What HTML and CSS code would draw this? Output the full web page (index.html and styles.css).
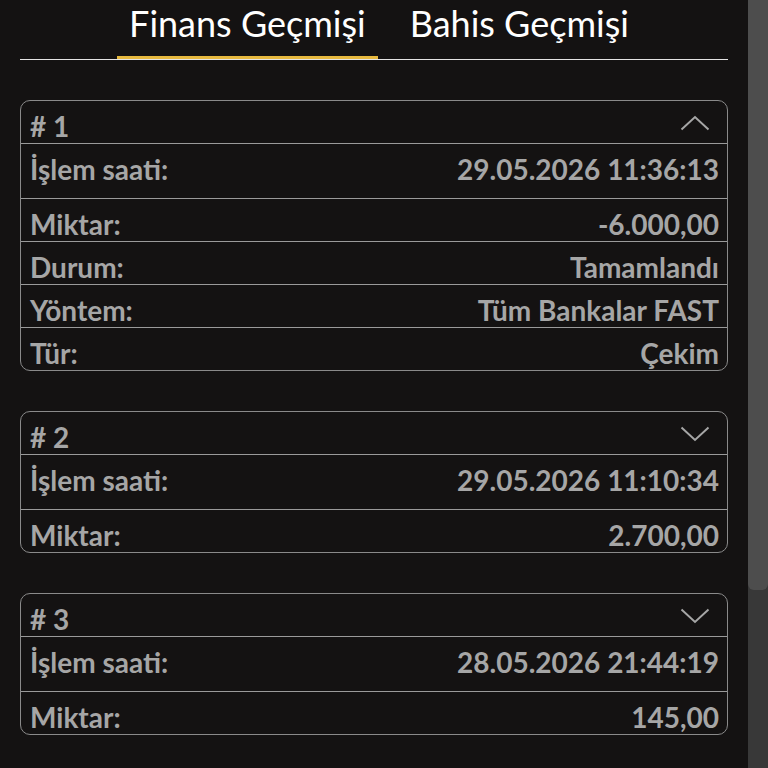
FILE: index.html
```html
<!DOCTYPE html>
<html lang="tr">
<head>
<meta charset="utf-8">
<title>Finans Geçmişi</title>
<link rel="stylesheet" href="styles.css">
</head>
<body>
<div class="page">
  <nav class="tabs">
    <a class="tab tab--active">Finans Geçmişi</a>
    <a class="tab">Bahis Geçmişi</a>
  </nav>

  <section class="history">
    <article class="card">
      <header class="card__head">
        <span># 1</span>
        <svg class="chev" width="30" height="16" viewBox="0 0 30 16"><polyline points="1.5,14.5 15,2 28.5,14.5" /></svg>
      </header>
      <div class="row row--time"><span>İşlem saati:</span><span>29.05.2026 11:36:13</span></div>
      <div class="row"><span>Miktar:</span><span>-6.000,00</span></div>
      <div class="row"><span>Durum:</span><span>Tamamlandı</span></div>
      <div class="row"><span>Yöntem:</span><span>Tüm Bankalar FAST</span></div>
      <div class="row"><span>Tür:</span><span>Çekim</span></div>
    </article>

    <article class="card">
      <header class="card__head">
        <span># 2</span>
        <svg class="chev" width="30" height="16" viewBox="0 0 30 16"><polyline points="1.5,1.5 15,14 28.5,1.5" /></svg>
      </header>
      <div class="row row--time"><span>İşlem saati:</span><span>29.05.2026 11:10:34</span></div>
      <div class="row"><span>Miktar:</span><span>2.700,00</span></div>
    </article>

    <article class="card">
      <header class="card__head">
        <span># 3</span>
        <svg class="chev" width="30" height="16" viewBox="0 0 30 16"><polyline points="1.5,1.5 15,14 28.5,1.5" /></svg>
      </header>
      <div class="row row--time"><span>İşlem saati:</span><span>28.05.2026 21:44:19</span></div>
      <div class="row"><span>Miktar:</span><span>145,00</span></div>
    </article>
  </section>
</div>
<div class="scrollbar"><div class="scrollbar__thumb"></div></div>
</body>
</html>
```

FILE: styles.css
```css
html {
  background: #141212;
  overflow: hidden;
}

body {
  margin: 0;
  height: 768px;
  display: flex;
  background: #141212;
  font-family: Lato, "Open Sans", sans-serif;
}

.page {
  flex: 1;
  min-width: 0;
  padding: 0 20px;
}

/* vertical scroll indicator on the right edge */
.scrollbar {
  width: 20px;
  flex: none;
  background: #383838;
}
.scrollbar__thumb {
  height: 590px;
  background: #4d4d4d;
  border-radius: 0 0 6px 6px;
}

/* tab strip */
.tabs {
  display: flex;
  justify-content: center;
  gap: 20px;
  border-bottom: 1px solid #e4e4e4;
  padding-left: 10px;
}

.tab {
  position: relative;
  height: 59px;
  box-sizing: border-box;
  padding: 3px 12px 0;
  font-size: 36px;
  line-height: 40px;
  color: #ffffff;
  white-space: nowrap;
}

.tab--active::after {
  content: "";
  position: absolute;
  left: 0;
  right: 0;
  bottom: 0;
  height: 3px;
  background: #e7b93f;
}

/* history cards */
.history {
  display: flex;
  flex-direction: column;
  gap: 40px;
  padding-top: 40px;
}

.card {
  border: 1px solid #8a8a8a;
  border-radius: 10px;
  color: #a6a6a6;
  font-size: 28px;
  font-weight: 700;
  line-height: 34px;
}

.card__head {
  display: flex;
  justify-content: space-between;
  align-items: center;
  height: 42px;
  box-sizing: border-box;
  padding: 8px 17px 0 9px;
}

.card__head > span {
  align-self: flex-start;
}

.chev {
  margin-top: -6px;
}
.chev polyline {
  fill: none;
  stroke: #a6a6a6;
  stroke-width: 2;
}

.row {
  display: flex;
  justify-content: space-between;
  border-top: 1px solid #9a9a9a;
  height: 43px;
  box-sizing: border-box;
  padding: 8px 8px 0 9px;
  white-space: nowrap;
}

.row--time {
  height: 55px;
}
```
